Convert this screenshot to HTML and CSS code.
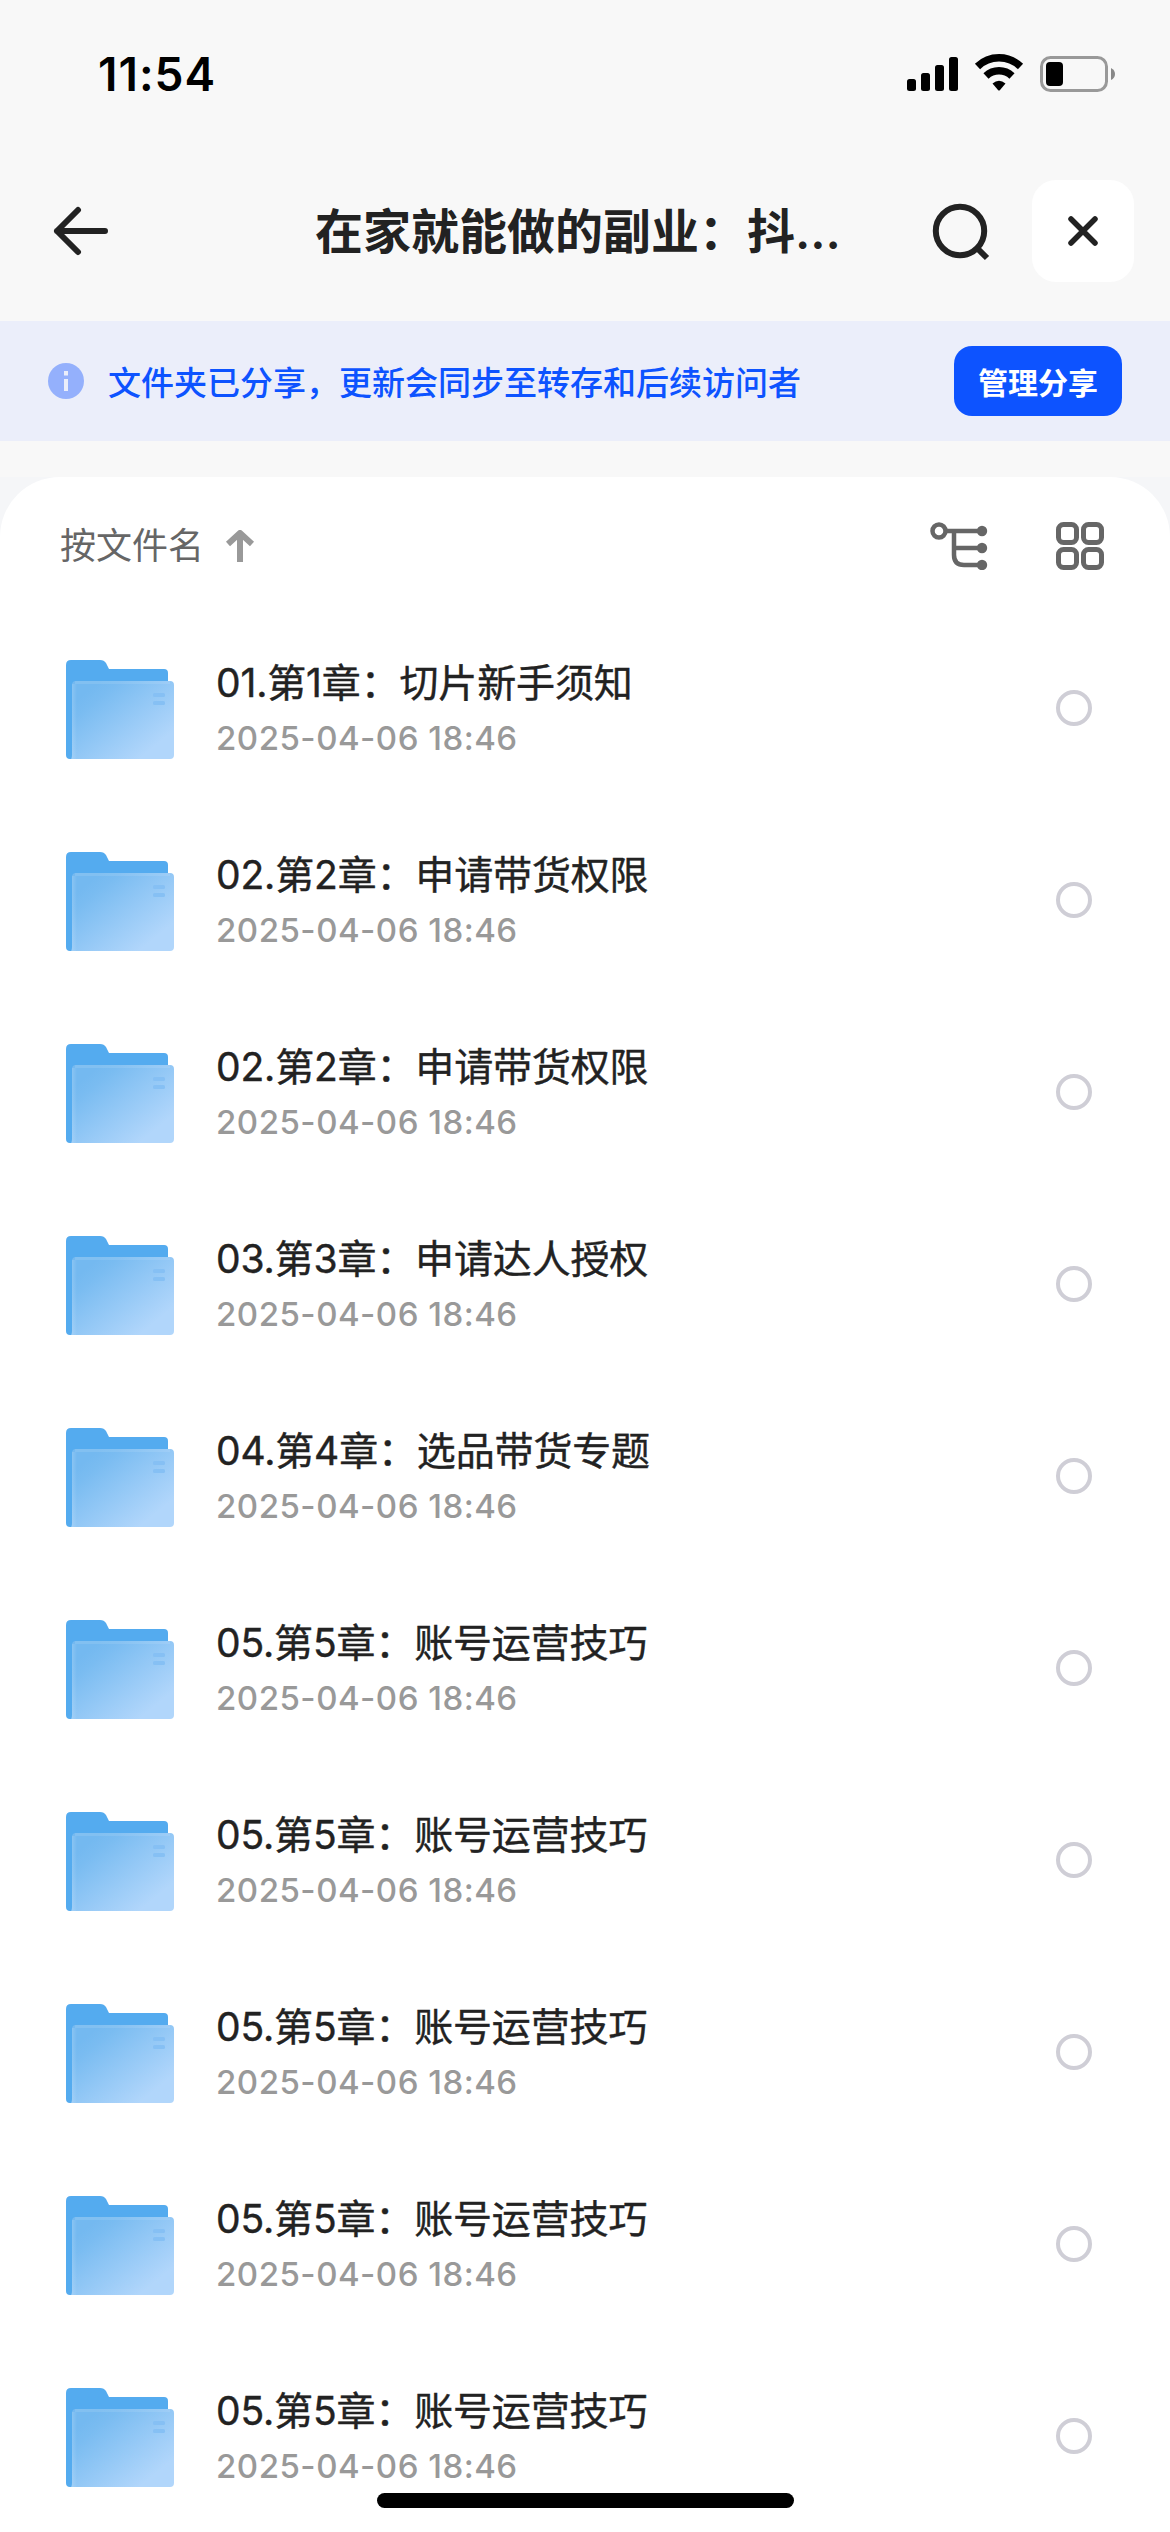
FILE: index.html
```html
<!DOCTYPE html>
<html lang="zh-CN">
<head>
    <meta charset="UTF-8">
    <meta name="viewport" content="width=device-width, initial-scale=1.0">
    <title>文件夹</title>
    <link rel="stylesheet" href="styles.css">
</head>
<body>
    <!-- 图标定义 -->
    <svg class="defs" width="0" height="0">
        <defs>
            <linearGradient id="front" x1="0.1" y1="0.2" x2="0.8" y2="0.85">
                <stop offset="0" stop-color="#74b9f0"/>
                <stop offset="0.15" stop-color="#7abcf1"/>
                <stop offset="1" stop-color="#b1d6fb"/>
            </linearGradient>
            <linearGradient id="edge" x1="0" y1="0" x2="1" y2="0">
                <stop offset="0" stop-color="#fff" stop-opacity="0.16"/>
                <stop offset="1" stop-color="#fff" stop-opacity="0"/>
            </linearGradient>
        </defs>
        <symbol id="folder" viewBox="0 0 108 99">
            <path fill="#54abef" d="M5 0H34C37 0 38.500 1 40 3L43 9H98Q102 9 102 13V50L6 99H4Q0 99 0 95V5Q0 0 5 0Z"/>
            <path fill="url(#front)" d="M10 21H104Q108 21 108 25V95Q108 99 104 99H5Q6 97 6 95V25Q6 21 10 21Z"/>
            <rect x="6" y="24" width="5" height="75" fill="url(#edge)"/>
            <rect x="9" y="21" width="95" height="3" fill="#fff" opacity="0.1"/>
            <rect x="87" y="33" width="12" height="4" rx="1.500" fill="#86c0f4"/>
            <rect x="87" y="41" width="12" height="4" rx="1.500" fill="#86c0f4"/>
        </symbol>
    </svg>

    <div class="status-bar">
        <span class="time">11:54</span>
        <svg class="status-icons" viewBox="0 0 210 40">
            <rect x="0" y="25" width="9" height="12" rx="2.500"/>
            <rect x="14" y="19" width="9" height="18" rx="2.500"/>
            <rect x="28" y="11" width="9" height="26" rx="2.500"/>
            <rect x="42" y="3" width="9" height="34" rx="2.500"/>
            <g fill="none" stroke="#000" stroke-width="7.500">
                <path d="M70.500 12.500A31 31 0 0 1 113.500 12.500"/>
                <path d="M79 22A19 19 0 0 1 105 22"/>
            </g>
            <path d="M85.500 29.500Q92 24 98.500 29.500L93 36Q92 37 91 36Z"/>
            <rect x="134.500" y="3.500" width="65" height="33" rx="9" fill="none" stroke="#999" stroke-width="3"/>
            <rect x="139" y="8" width="17" height="24" rx="4"/>
            <path fill="#888" d="M204 14Q208 16 208 20Q208 24 204 26Z"/>
        </svg>
    </div>

    <div class="nav-bar">
        <svg class="back" viewBox="0 0 60 60">
            <path d="M54 30H6M27 9L6 30L27 51"/>
        </svg>
        <h1 class="title">在家就能做的副业：抖...</h1>
        <svg class="search" viewBox="0 0 60 60">
            <circle cx="29" cy="30" r="24.200"/>
            <path d="M46 47L56 57"/>
        </svg>
        <button class="close">
            <svg viewBox="0 0 30 30"><path d="M3 3L27 27M27 3L3 27"/></svg>
        </button>
    </div>

    <div class="notice">
        <svg class="info" viewBox="0 0 36 36">
            <circle cx="18" cy="18" r="18" fill="#94b0fc"/>
            <path fill="#ebeefa" d="M16 8H20V12.500H16ZM16 16H20V28H16Z"/>
        </svg>
        <span class="notice-text">文件夹已分享，更新会同步至转存和后续访问者</span>
        <button class="manage">管理分享</button>
    </div>

    <div class="panel-wrap">
        <div class="panel">
            <div class="toolbar">
                <span class="sort">按文件名</span>
                <svg class="sort-arrow" viewBox="0 0 30 32">
                    <path d="M15 32V4M3 14L15 3L27 14"/>
                </svg>
                <svg class="tree" viewBox="0 0 58 48">
                    <g fill="none" stroke="#666" stroke-width="4.500">
                        <circle cx="9" cy="9" r="6.500"/>
                        <path d="M16 9H52M24 9V33Q24 43 34 43H52M24 26H52"/>
                    </g>
                    <circle cx="52" cy="9" r="5.200"/>
                    <circle cx="52" cy="26" r="5.200"/>
                    <circle cx="52" cy="43" r="5.200"/>
                </svg>
                <svg class="grid" viewBox="0 0 48 48">
                    <rect x="2.500" y="2.500" width="18" height="18" rx="5"/>
                    <rect x="27.500" y="2.500" width="18" height="18" rx="5"/>
                    <rect x="2.500" y="27.500" width="18" height="18" rx="5"/>
                    <rect x="27.500" y="27.500" width="18" height="18" rx="5"/>
                </svg>
            </div>
            <ul class="file-list" id="fileList"></ul>
        </div>
    </div>
    <div class="home-indicator"></div>

    <script>
        const files = [
            '01.第1章：切片新手须知',
            '02.第2章：申请带货权限',
            '02.第2章：申请带货权限',
            '03.第3章：申请达人授权',
            '04.第4章：选品带货专题',
            '05.第5章：账号运营技巧',
            '05.第5章：账号运营技巧',
            '05.第5章：账号运营技巧',
            '05.第5章：账号运营技巧',
            '05.第5章：账号运营技巧'
        ];

        document.getElementById('fileList').innerHTML = files.map(name => `
            <li class="file">
                <svg class="folder"><use href="#folder"/></svg>
                <div class="file-info">
                    <div class="file-name">${name}</div>
                    <div class="file-date">2025-04-06 18:46</div>
                </div>
                <span class="radio"></span>
            </li>
        `).join('');
    </script>
</body>
</html>
```
FILE: styles.css
```css
* {
    box-sizing: border-box;
}

body {
    margin: 0;
    width: 1170px;
    height: 2532px;
    overflow: hidden;
    background: #f8f8f8;
    color: #222;
    font-family: Inter, "Noto Sans CJK SC", sans-serif;
}

svg {
    display: block;
    flex: none;
}

button {
    border: none;
    padding: 0;
    font-family: inherit;
}

.defs {
    position: absolute;
}

.status-bar {
    display: flex;
    align-items: center;
    justify-content: space-between;
    height: 148px;
    padding: 0 53px 0 98px;
    color: #000;
}

.time {
    font-size: 46px;
    font-weight: 600;
    line-height: 60px;
    letter-spacing: 1px;
}

.status-icons {
    width: 210px;
    height: 40px;
}

.nav-bar {
    display: flex;
    align-items: center;
    height: 173px;
    padding: 0 36px 7px 51px;
}

.back,
.search {
    width: 60px;
    height: 60px;
    fill: none;
    stroke: #222;
    stroke-width: 6;
}

.back {
    stroke-linecap: round;
    stroke-linejoin: round;
}

.title {
    width: 526px;
    margin: 2px 0 0 204px;
    font-size: 48px;
    font-weight: 600;
    line-height: 60px;
    white-space: nowrap;
}

.search {
    margin-left: 90px;
}

.close {
    display: flex;
    align-items: center;
    justify-content: center;
    width: 102px;
    height: 102px;
    margin-left: auto;
    border-radius: 24px;
    background: #fff;
}

.close svg {
    width: 30px;
    height: 30px;
    fill: none;
    stroke: #222;
    stroke-width: 5.5;
    stroke-linecap: round;
}

.notice {
    display: flex;
    align-items: center;
    height: 120px;
    padding: 0 48px;
    background: #ebeefa;
}

.info {
    width: 36px;
    height: 36px;
}

.notice-text {
    margin: 4px 0 0 24px;
    color: #0d53ff;
    font-size: 33px;
    font-weight: 500;
    line-height: 48px;
}

.manage {
    width: 168px;
    height: 70px;
    margin-left: auto;
    padding-bottom: 1px;
    border-radius: 18px;
    background: #0d53ff;
    color: #fff;
    font-size: 30px;
    font-weight: 700;
}

.panel-wrap {
    margin-top: 36px;
    background: #f5f6f8;
}

.panel {
    height: 2055px;
    border-radius: 60px 60px 0 0;
    background: #fff;
}

.toolbar {
    display: flex;
    align-items: center;
    height: 137px;
    padding: 0 66px 0 60px;
}

.sort {
    color: #666;
    font-size: 36px;
    line-height: 50px;
}

.sort-arrow {
    width: 30px;
    height: 32px;
    margin-left: 21px;
    fill: none;
    stroke: #999;
    stroke-width: 6;
    stroke-linejoin: round;
}

.tree {
    width: 58px;
    height: 48px;
    margin-left: auto;
    fill: #666;
}

.grid {
    width: 48px;
    height: 48px;
    margin-left: 68px;
    fill: none;
    stroke: #666;
    stroke-width: 5;
}

.file-list {
    margin: 0;
    padding: 0;
    list-style: none;
}

.file {
    display: flex;
    align-items: center;
    height: 192px;
    padding: 0 78px 1px 66px;
}

.folder {
    width: 108px;
    height: 99px;
}

.file-info {
    margin-left: 42px;
}

.file-name {
    font-size: 39px;
    line-height: 56px;
    letter-spacing: -0.15px;
    white-space: nowrap;
    -webkit-text-stroke: 0.4px #222;
}

.file-date {
    color: #999;
    font-size: 33px;
    font-weight: 500;
    line-height: 54px;
    letter-spacing: 0.5px;
}

.radio {
    width: 36px;
    height: 36px;
    margin: 0 0 3px auto;
    border: 4px solid #cfced6;
    border-radius: 50%;
}

.home-indicator {
    position: fixed;
    left: 377px;
    bottom: 24px;
    width: 417px;
    height: 15px;
    border-radius: 8px;
    background: #000;
}
```
